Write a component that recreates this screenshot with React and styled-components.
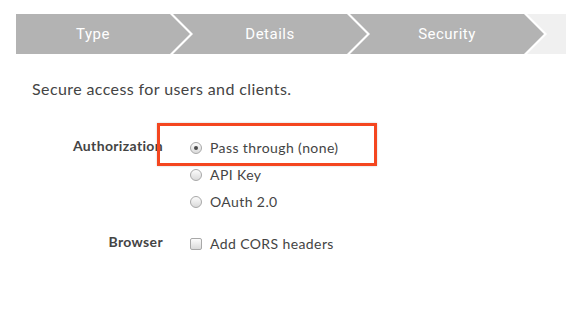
import React from "react";
import styled, { createGlobalStyle } from "styled-components";

const Global = createGlobalStyle`
  html, body { margin: 0; padding: 0; background: #fff; }
  body { font-family: Lato, "Open Sans", sans-serif; color: #444; }
`;

const Page = styled.div`
  width: 566px;
  height: 316px;
  overflow: hidden;
  padding-top: 14px;
  box-sizing: border-box;
`;

const Stepper = styled.div`
  display: flex;
  height: 40px;
  margin-left: 16px;
  overflow: hidden;
`;

const Step = styled.div`
  flex: 0 0 194px;
  height: 40px;
  margin-left: -17px;
  &:first-child { margin-left: -20px; }
  background: ${(p) => (p.$done ? "#b3b3b3" : "#f0f0f0")};
  clip-path: polygon(0 0, calc(100% - 20px) 0, 100% 50%, calc(100% - 20px) 100%, 0 100%, 20px 50%);
  display: flex;
  align-items: center;
  justify-content: center;
  color: #fff;
  font-family: Roboto, "Liberation Sans", sans-serif;
  font-size: 15px;
  letter-spacing: 0.5px;
`;

const Intro = styled.p`
  margin: 25px 0 0 32px;
  font-size: 16px;
  line-height: 20px;
  letter-spacing: 0.4px;
  color: #444;
`;

const Form = styled.div`
  display: grid;
  grid-template-columns: 163px 1fr;
  column-gap: 27px;
  row-gap: 15px;
  margin-top: 35px;
`;

const Label = styled.div`
  text-align: right;
  font-weight: 700;
  font-size: 14px;
  line-height: 24px;
  letter-spacing: 0.35px;
  color: #444;
`;

const Options = styled.div`
  display: flex;
  flex-direction: column;
  position: relative;
`;

const Option = styled.label`
  display: flex;
  align-items: center;
  gap: 8px;
  height: 27px;
  font-size: 14px;
  letter-spacing: 0.4px;
  color: #444;
  position: relative;
`;

const Radio = styled.span`
  width: 12px;
  height: 12px;
  box-sizing: border-box;
  border-radius: 50%;
  border: 1px solid #a8a8a8;
  background: linear-gradient(#fcfcfc, #dadada);
  display: flex;
  align-items: center;
  justify-content: center;
  &::after {
    content: "";
    display: ${(p) => (p.$checked ? "block" : "none")};
    width: 4px;
    height: 4px;
    border-radius: 50%;
    background: #4a4a4a;
  }
`;

const Check = styled.span`
  width: 12px;
  height: 12px;
  box-sizing: border-box;
  border-radius: 2px;
  border: 1px solid #a8a8a8;
  background: linear-gradient(#fcfcfc, #dadada);
`;

const Highlight = styled.div`
  position: absolute;
  left: -33px;
  top: -11px;
  width: 220px;
  height: 43px;
  box-sizing: border-box;
  border: 3px solid #f4461f;
  box-shadow: 0 0 2px rgba(0, 0, 0, 0.2);
  pointer-events: none;
`;

export default function App() {
  return (
    <Page>
      <Global />
      <Stepper>
        <Step $done>Type</Step>
        <Step $done>Details</Step>
        <Step $done>Security</Step>
        <Step />
      </Stepper>
      <Intro>Secure access for users and clients.</Intro>
      <Form>
        <Label>Authorization</Label>
        <Options>
          <Option>
            <Radio $checked />
            Pass through (none)
            <Highlight />
          </Option>
          <Option>
            <Radio />
            API Key
          </Option>
          <Option>
            <Radio />
            OAuth 2.0
          </Option>
        </Options>
        <Label>Browser</Label>
        <Options>
          <Option>
            <Check />
            Add CORS headers
          </Option>
        </Options>
      </Form>
    </Page>
  );
}
